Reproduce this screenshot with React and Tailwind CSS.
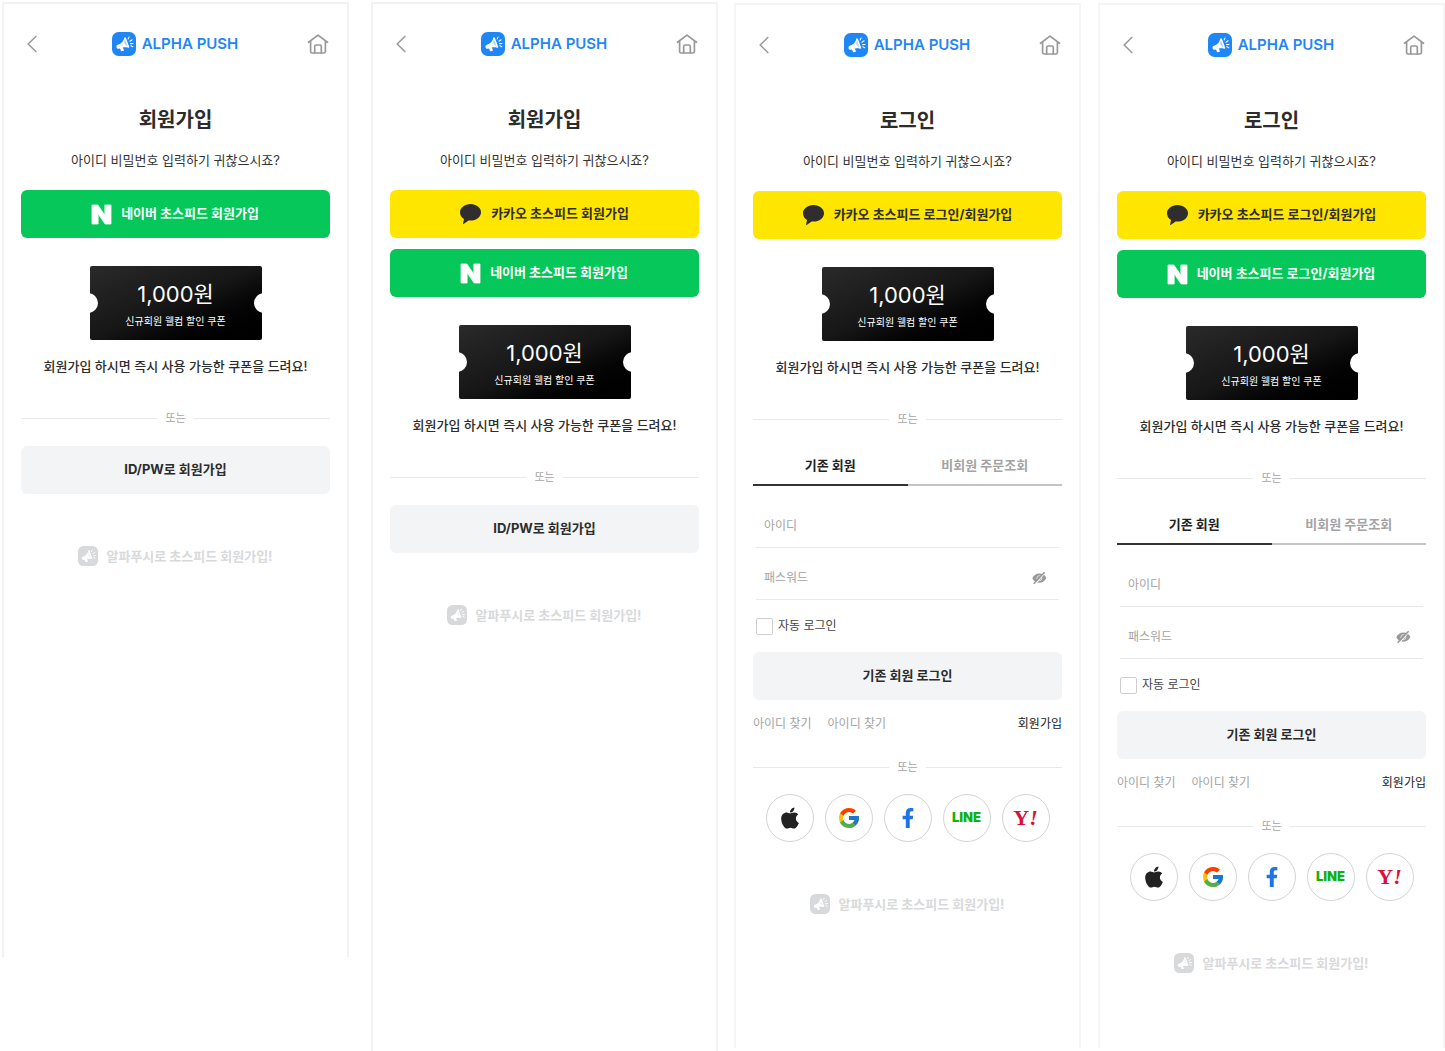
import { useState } from 'react'
import { FaApple, FaFacebookF } from 'react-icons/fa'
import { FcGoogle } from 'react-icons/fc'
import { SiNaver } from 'react-icons/si'

const providers = {
  naver: { name: '네이버', cls: 'bg-[#05c75a] text-white' },
  kakao: { name: '카카오', cls: 'bg-[#fee600] text-[#2f2d2e]' },
}

function PushMark({ className }) {
  return (
    <svg viewBox="0 0 24 24" className={className} aria-hidden="true">
      <rect width="24" height="24" rx="6.5" fill="currentColor" />
      <path
        fill="#fff"
        d="M12.6 5.300c.5-.3 1-.1 1.300.4l3.300 9.100c.2.600-.2 1.100-.9.9-2-.5-3.700-.6-5.500-.1l1.100 2.300c.2.500 0 .8-.4.9l-1.600.5c-.4.1-.7-.1-.9-.5L7.900 16.500l-.9.2c-1.200.3-2-.2-2.400-1.300-.4-1.200 0-2.100 1.200-2.600l1.900-.8c2.500-1 3.800-3.200 4.900-6.700z"
      />
      <path fill="currentColor" d="M13.100 7.800l2.200 6.200c-1.400-.6-2.300-1.500-2.800-2.800-.4-1.200-.2-2.300.6-3.400z" opacity=".4" />
      <path
        d="M16.200 6.900l.8-1.800M17.900 9.200l2.200-1.400M18.600 11.600l2.400-.1M18.900 13.800l1.900.9"
        stroke="#fff"
        strokeWidth="1.100"
        strokeLinecap="round"
      />
    </svg>
  )
}

function KakaoMark() {
  return (
    <svg viewBox="0 0 21 20" className="w-[21px] h-5" aria-hidden="true">
      <path
        fill="currentColor"
        d="M10.500 0C4.700 0 0 3.700 0 8.300c0 2.900 1.600 5.200 4 6.700L3.100 19.500c-.1.400.2.600.5.400l5-3.400c.6.100 1.200.1 1.900.1 5.800 0 10.500-3.700 10.500-8.300S16.300 0 10.500 0z"
      />
    </svg>
  )
}

function Header() {
  return (
    <header className="flex items-center justify-between h-12 pl-1.5 pr-px">
      <button type="button" aria-label="뒤로" className="w-4 text-[#999]">
        <svg viewBox="0 0 10 18" className="w-2.5 h-[18px]" fill="none" stroke="currentColor" strokeWidth="1.500">
          <path d="M9.300 1L1.200 9l8.100 8" />
        </svg>
      </button>
      <a href="#home" className="flex items-center gap-1.5 text-[#1f87f5] text-[15px] font-semibold">
        <PushMark className="w-6 h-6" />
        ALPHA PUSH
      </a>
      <a href="#main" aria-label="홈" className="text-[#999]">
        <svg
          viewBox="0 0 22 20"
          className="w-[22px] h-5"
          fill="none"
          stroke="currentColor"
          strokeWidth="1.700"
          strokeLinejoin="round"
          strokeLinecap="round"
        >
          <path d="M1.500 8.300L11 1.100l9.500 7.200M3.600 7.200v10.200c0 1 .6 1.600 1.600 1.600h11.600c1 0 1.600-.6 1.600-1.600V7.200" />
          <path d="M7.700 18.800v-6.300c0-.9.600-1.500 1.500-1.500h3.600c.9 0 1.500.6 1.500 1.500v6.300" />
        </svg>
      </a>
    </header>
  )
}

function SpeedButton({ provider, label }) {
  const p = providers[provider]
  return (
    <button
      type="button"
      className={`w-full h-12 rounded-md flex items-center justify-center gap-2.5 text-[13px] font-bold ${p.cls}`}
    >
      {provider === 'naver' ? (
        <SiNaver className="w-[19px] h-[19px] overflow-visible" stroke="currentColor" strokeWidth="1" />
      ) : (
        <KakaoMark />
      )}
      {p.name} 초스피드 {label}
    </button>
  )
}

function Coupon() {
  return (
    <div className="relative overflow-hidden w-[172px] h-[74px] mx-auto mt-7 rounded-xs bg-linear-to-br from-[#2a2a2a] via-[#161616] to-black text-white text-center pt-3">
      <span className="absolute -left-3 top-[27px] w-5 h-5 rounded-full bg-white" />
      <span className="absolute -right-3 top-[27px] w-5 h-5 rounded-full bg-white" />
      <p className="text-[22px] leading-8">1,000원</p>
      <p className="text-[10px] leading-[22px]">신규회원 웰컴 할인 쿠폰</p>
    </div>
  )
}

function OrDivider() {
  return (
    <div className="flex items-center gap-2 text-[11px] leading-4 text-[#a5a5a5]">
      <span className="flex-1 h-px bg-[#e8e8e8]" />
      또는
      <span className="flex-1 h-px bg-[#e8e8e8]" />
    </div>
  )
}

function GrayButton({ children, type = 'button' }) {
  return (
    <button type={type} className="w-full h-12 rounded-md bg-[#f2f4f5] text-[#2c2c2c] text-[13px] font-bold">
      {children}
    </button>
  )
}

function Field({ label, type = 'text', children }) {
  return (
    <div className="flex items-center h-[52px] mx-[3px] px-2 pt-2 border-b border-[#e9e9e9]">
      <input
        type={type}
        aria-label={label}
        placeholder={label}
        className="flex-1 min-w-0 h-8 text-xs leading-6 outline-none placeholder:text-[#a3a3a3]"
      />
      {children}
    </div>
  )
}

function LoginForm() {
  const [tab, setTab] = useState('member')
  const [show, setShow] = useState(false)
  const tabs = [
    { v: 'member', label: '기존 회원' },
    { v: 'guest', label: '비회원 주문조회' },
  ]

  return (
    <form onSubmit={(e) => e.preventDefault()}>
      <div className="flex mt-5">
        {tabs.map((t) => (
          <button
            key={t.v}
            type="button"
            onClick={() => setTab(t.v)}
            className={`flex-1 h-[39px] text-[13px] font-bold border-b-2 ${
              tab === t.v ? 'text-[#222] border-[#333]' : 'text-[#a3a3a3] border-[#c4c4c4]'
            }`}
          >
            {t.label}
          </button>
        ))}
      </div>

      <div className="pt-2.5">
        <Field label="아이디" />
        <Field label="패스워드" type={show ? 'text' : 'password'}>
          <button type="button" aria-label="비밀번호 표시" onClick={() => setShow(!show)} className="mr-1 text-[#999]">
            <svg viewBox="0 0 15 12" className="w-[15px] h-3" aria-hidden="true">
              <path fill="currentColor" d="M.3 6.300C1.600 3.300 4.300 1.600 7.500 1.600c2.900 0 5.800 1.600 6.900 4.400-1.300 3-4.200 4.700-7.300 4.700C4 10.700 1.500 9.100.3 6.300z" />
              <circle cx="7.400" cy="6.200" r="2.500" fill="none" stroke="#fff" strokeWidth=".7" />
              <path d="M2.900 12.200L13.200.6" stroke="#fff" strokeWidth="1.300" />
              <path d="M1.700 11.800L12.600.2" stroke="currentColor" strokeWidth="1.500" />
            </svg>
          </button>
        </Field>
      </div>

      <label className="flex items-center gap-[5px] h-[52px] ml-[3px] text-xs text-[#444]">
        <input
          type="checkbox"
          className="appearance-none w-[17px] h-[17px] rounded-xs border border-[#cfcfcf] checked:bg-[#1f87f5]"
        />
        자동 로그인
      </label>

      <GrayButton type="submit">기존 회원 로그인</GrayButton>

      <div className="flex gap-4 h-12 items-center text-xs text-[#a3a3a3]">
        <a href="#find-id">아이디 찾기</a>
        <a href="#find-pw">아이디 찾기</a>
        <a href="#signup" className="ml-auto text-[#222]">회원가입</a>
      </div>
    </form>
  )
}

const socials = [
  { name: 'Apple', icon: <FaApple className="w-6 h-6 text-[#222]" /> },
  { name: 'Google', icon: <FcGoogle className="w-6 h-6" /> },
  { name: 'Facebook', icon: <FaFacebookF className="w-5 h-5 text-[#1e74e6]" /> },
  { name: 'LINE', icon: <span className="font-black text-[13px] text-[#12b10e]">LINE</span> },
  {
    name: 'Yahoo',
    icon: (
      <span className="font-['Liberation_Serif',serif] font-bold text-[22px] leading-6 text-[#d9103c]">
        Y<i>!</i>
      </span>
    ),
  },
]

function SocialRow() {
  return (
    <div className="flex justify-center gap-[11px] mt-[19px]">
      {socials.map((s) => (
        <button
          key={s.name}
          type="button"
          aria-label={s.name}
          className="w-12 h-12 rounded-full border border-[#d4d4d4] flex items-center justify-center"
        >
          {s.icon}
        </button>
      ))}
    </div>
  )
}

function Screen({ mode, buttons, className }) {
  const login = mode === 'login'
  return (
    <section className={`flex-1 min-w-0 border-2 border-b-0 px-[17px] pt-4 ${className}`}>
      <Header />
      <h1 className="mt-9 text-xl leading-8 font-bold text-center">{login ? '로그인' : '회원가입'}</h1>
      <p className="mt-3 text-[13px] leading-6 text-center text-[#333]">아이디 비밀번호 입력하기 귀찮으시죠?</p>

      <div className="flex flex-col gap-[11px] mt-[18px]">
        {buttons.map((b) => (
          <SpeedButton key={b} provider={b} label={login ? '로그인/회원가입' : '회원가입'} />
        ))}
      </div>

      <Coupon />
      <p className="mt-3.5 mb-8 text-[13px] leading-6 font-medium text-center">
        회원가입 하시면 즉시 사용 가능한 쿠폰을 드려요!
      </p>
      <OrDivider />

      {login ? (
        <>
          <LoginForm />
          <div className="mt-[11px]">
            <OrDivider />
          </div>
          <SocialRow />
        </>
      ) : (
        <div className="mt-5">
          <GrayButton>ID/PW로 회원가입</GrayButton>
        </div>
      )}

      <p className="flex items-center justify-center gap-2 mt-[50px] text-[13px] leading-6 font-bold text-[#d8d9db]">
        <PushMark className="w-5 h-5" />
        알파푸시로 초스피드 회원가입!
      </p>
    </section>
  )
}

export default function App() {
  return (
    <main className="flex items-stretch min-h-screen bg-white pt-0.5 pl-0.5 text-[#2c2c2c] font-['Inter','Noto_Sans_CJK_KR',sans-serif]">
      <Screen mode="signup" buttons={['naver']} className="mr-[22px] mb-[94px] border-[#f2f2f2]" />
      <Screen mode="signup" buttons={['kakao', 'naver']} className="mr-4 border-[#f2f2f2]" />
      <Screen mode="login" buttons={['kakao']} className="mt-px mb-[3px] mr-[17px] border-[#f5f5f5]" />
      <Screen mode="login" buttons={['kakao', 'naver']} className="mt-px mb-[3px] border-[#f5f5f5]" />
    </main>
  )
}
